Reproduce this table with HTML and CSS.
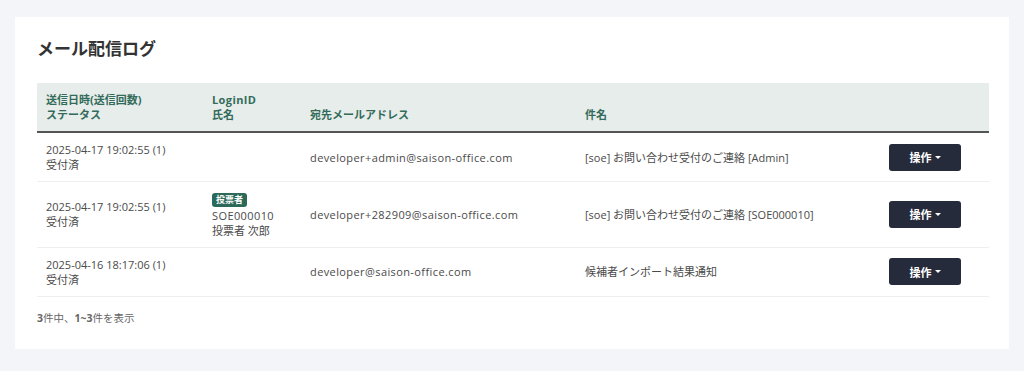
FILE: index.html
```html
<!DOCTYPE html>
<html lang="ja">
<head>
<meta charset="utf-8">
<title>メール配信ログ</title>
<link rel="stylesheet" href="styles.css">
</head>
<body>
<div class="page">
  <section class="card">
    <h1 class="title">メール配信ログ</h1>
    <table class="log">
      <thead>
        <tr>
          <th class="c1">送信日時(送信回数)<br>ステータス</th>
          <th class="c2"><span class="wide">LoginID</span><br>氏名</th>
          <th class="c3">宛先メールアドレス</th>
          <th class="c4">件名</th>
          <th class="c5"></th>
        </tr>
      </thead>
      <tbody>
        <tr>
          <td>2025-04-17 19:02:55 (1)<br>受付済</td>
          <td></td>
          <td><span class="wide">developer+admin@saison-office.com</span></td>
          <td>[soe] お問い合わせ受付のご連絡 [Admin]</td>
          <td><button class="op">操作<span class="caret"></span></button></td>
        </tr>
        <tr>
          <td>2025-04-17 19:02:55 (1)<br>受付済</td>
          <td><span class="badge">投票者</span><br><span class="wide">SOE000010</span><br>投票者 次郎</td>
          <td><span class="wide">developer+282909@saison-office.com</span></td>
          <td>[soe] お問い合わせ受付のご連絡 [SOE000010]</td>
          <td><button class="op">操作<span class="caret"></span></button></td>
        </tr>
        <tr>
          <td>2025-04-16 18:17:06 (1)<br>受付済</td>
          <td></td>
          <td><span class="wide">developer@saison-office.com</span></td>
          <td>候補者インポート結果通知</td>
          <td><button class="op">操作<span class="caret"></span></button></td>
        </tr>
      </tbody>
    </table>
    <p class="summary"><b>3</b>件中、<b>1~3</b>件を表示</p>
  </section>
</div>
</body>
</html>
```
FILE: styles.css
```css
* { box-sizing: border-box; }
html, body { margin: 0; padding: 0; }
body {
  background: #f3f5f9;
  font-family: "Open Sans", "Noto Sans CJK JP", sans-serif;
  color: #4a4a4a;
  font-size: 11px;
}
.page { padding: 17px 15px 23px; }
.card {
  background: #fff;
  padding: 20px 20px 23px 22px;
}
.title {
  margin: 0 0 22px;
  font-size: 17px;
  line-height: 24px;
  font-weight: 700;
  color: #333;
}
.log {
  width: 100%;
  border-collapse: collapse;
  table-layout: fixed;
}
.log th {
  background: #e7edeb;
  color: #336b5a;
  font-weight: 700;
  text-align: left;
  vertical-align: bottom;
  padding: 9px 9px;
  line-height: 15px;
  border-bottom: 2px solid #555;
  font-size: 11px;
}
.c1 { width: 166px; }
.c2 { width: 98px; }
.c3 { width: 275px; }
.c5 { width: 109px; }
.log td {
  padding: 9px 9px;
  line-height: 15px;
  vertical-align: middle;
  border-bottom: 1px solid #eceeef;
}
.wide { letter-spacing: 0.4px; }
.badge {
  display: inline-block;
  background: #2b6a58;
  color: #fff;
  font-size: 9px;
  font-weight: 700;
  line-height: 10px;
  padding: 2px 4px;
  border-radius: 3px;
  vertical-align: middle;
  margin-bottom: 1px;
}
.op {
  display: inline-flex;
  align-items: center;
  justify-content: center;
  gap: 3px;
  width: 72px;
  height: 27px;
  background: #262b3b;
  color: #fff;
  border: none;
  border-radius: 3px;
  font-family: inherit;
  font-size: 11px;
  font-weight: 700;
}
.caret {
  width: 0; height: 0;
  border-left: 3px solid transparent;
  border-right: 3px solid transparent;
  border-top: 3px solid #fff;
}
.summary {
  margin: 14px 0 0;
  font-size: 10.5px;
  line-height: 15px;
  color: #666;
}
.summary b { font-weight: 700; }
```
